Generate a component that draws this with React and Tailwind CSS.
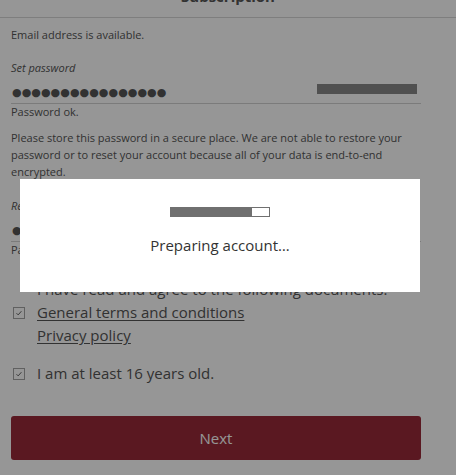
import React from "react";

function Check() {
  return (
    <svg width="12" height="12" viewBox="0 0 12 12" className="shrink-0">
      <rect x="0.5" y="0.5" width="11" height="11" fill="none" stroke="#a3a3a3" strokeWidth="1" />
      <path d="M3.5 6.2 L5.2 7.9 L8.4 4.2" fill="none" stroke="#555" strokeWidth="0.9" />
    </svg>
  );
}

function PwField({ bar }) {
  return (
    <div className="h-[29px] border-b border-[#d2d2d2] flex items-end justify-between pb-[3px]">
      <span className="ml-[1px] font-['DejaVu_Sans',sans-serif] text-[11px] leading-[14px] tracking-[0.05px] text-[#555]">
        ●●●●●●●●●●●●●●●●
      </span>
      {bar && <div className="w-[100px] h-[10px] bg-[#888] mr-[4px] mb-[6px]" />}
    </div>
  );
}

export default function App() {
  return (
    <div className="relative w-[456px] h-[475px] overflow-hidden bg-white font-['Open_Sans',sans-serif] text-[#555]">
      <div className="h-[18px] border-b border-[#d7d7d7] overflow-hidden">
        <div className="-mt-[12px] text-center font-bold text-[15px] leading-[16px] text-[#555]">Subscription</div>
      </div>
      <div className="ml-[11px] w-[410px] text-[11px]">
        <div className="mt-[9px] leading-[15px]">Email address is available.</div>
        <div className="mt-[18px] leading-[15px] italic">Set password</div>
        <PwField bar />
        <div className="leading-[15px]">Password ok.</div>
        <p className="mt-[10px] leading-[17px]">
          Please store this password in a secure place. We are not able to restore your password or to reset your account because all of your data is end-to-end encrypted.
        </p>
        <div className="mt-[18px] leading-[15px] italic">Re-enter password</div>
        <PwField />
        <div className="leading-[15px]">Password ok.</div>
        <div className="mt-[21px] text-[15px] leading-[23px]">
          <div className="pl-[26px]">I have read and agree to the following documents.</div>
          <div className="flex items-center gap-[12px] pl-[2px]">
            <Check />
            <span className="underline underline-offset-[2px]">General terms and conditions</span>
          </div>
          <div className="pl-[26px]">
            <span className="underline underline-offset-[2px]">Privacy policy</span>
          </div>
          <div className="mt-[15px] flex items-center gap-[12px] pl-[2px]">
            <Check />
            <span>I am at least 16 years old.</span>
          </div>
        </div>
        <button className="mt-[31px] w-full h-[44px] rounded-[3px] bg-[#992a38] text-white text-[15px]">Next</button>
      </div>

      <div className="absolute inset-0 bg-black/[0.41] pt-[179px] pl-[20px]">
        <div className="w-[400px] h-[113px] bg-white flex flex-col items-center pt-[28px]">
          <div className="w-[100px] h-[10px] border border-[#707070] bg-white">
            <div className="w-[81px] h-full bg-[#707070]" />
          </div>
          <div className="mt-[18px] text-[15px] leading-[20px] text-[#333]">Preparing account…</div>
        </div>
      </div>
    </div>
  );
}
